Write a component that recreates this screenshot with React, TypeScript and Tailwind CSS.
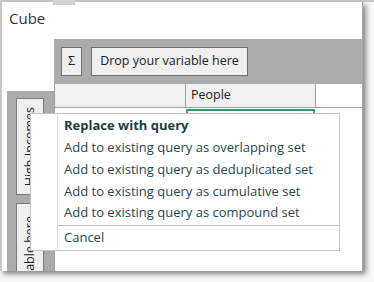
const items = [
  'Add to existing query as overlapping set',
  'Add to existing query as deduplicated set',
  'Add to existing query as cumulative set',
  'Add to existing query as compound set',
]

const ContextMenu: React.FC = () => {
  return (
    <div className="absolute left-[30px] top-[113px] flex h-[138px] w-[310px] border border-[#c4c4c4] bg-white py-px">
      <div className="w-[26px] shrink-0" />
      <div className="flex flex-1 flex-col border-l border-[#dcdcdc] text-[13px] text-[#264653]">
        <div className="flex h-[22px] items-center pl-[6px] font-bold text-[#1d3d3f]">
          Replace with query
        </div>
        {items.map((item) => (
          <div key={item} className="flex h-[22px] items-center pl-[6px]">
            {item}
          </div>
        ))}
        <div className="mt-px h-px bg-[#bdbdbd]" />
        <div className="mt-px flex h-[22px] items-center pl-[6px]">Cancel</div>
      </div>
    </div>
  )
}

const App: React.FC = () => {
  return (
    <div className="relative h-[282px] w-[374px] overflow-hidden bg-[#f6f6f6] font-['Open_Sans',sans-serif]">
      <div className="h-[2px] bg-[#c8c8c8]" />
      <div className="absolute left-[53px] top-0 h-[5px] w-[22px] bg-[#d2d2d2]" />
      <div className="flex h-[269px] w-[363px] flex-col border-l-2 border-r border-[#c8c8c8] border-r-[#a8a8a8] bg-white shadow-[3px_3px_5px_rgba(0,0,0,0.45)]">
        <div className="h-[37px] shrink-0 pl-[7px] pt-[5px] text-[15px] text-[#333333]">
          Cube
        </div>
        <div className="flex flex-1 overflow-hidden">
          <div className="flex w-[52px] shrink-0 flex-col pt-[52px]">
            <div className="ml-[5px] flex flex-1 flex-col gap-[8px] bg-[#ababab] pl-[9px] pt-[7px] text-[12.5px] text-[#222222]">
              <div className="flex h-[97px] w-[28px] shrink-0 items-center justify-center border border-[#7a7a7a] bg-[#efefef]">
                <span className="rotate-180 whitespace-nowrap [writing-mode:vertical-rl]">
                  High Incomes
                </span>
              </div>
              <div className="flex h-[160px] w-[28px] shrink-0 flex-col items-center justify-start border border-[#7a7a7a] bg-[#efefef] pt-[12px]">
                <span className="rotate-180 whitespace-nowrap [writing-mode:vertical-rl]">
                  Drop your variable here
                </span>
              </div>
            </div>
          </div>
          <div className="flex flex-1 flex-col">
            <div className="flex h-[45px] shrink-0 items-start gap-[9px] bg-[#ababab] pl-[7px] pt-[8px] text-[12.5px] text-[#222222]">
              <div className="flex h-[29px] w-[21px] items-center justify-center border border-[#6e6e6e] bg-[#efefef]">
                Σ
              </div>
              <div className="flex h-[29px] w-[157px] items-center justify-center border border-[#6e6e6e] bg-[#efefef]">
                Drop your variable here
              </div>
            </div>
            <div className="flex h-[24px] shrink-0 border-b border-l border-[#a0a0a0] text-[12.5px] text-[#222222]">
              <div className="w-[131px] border-r border-[#a0a0a0] bg-[#f0f0f0]" />
              <div className="flex w-[130px] items-center border-r border-[#a0a0a0] bg-[#f0f0f0] pl-[5px]">
                People
              </div>
            </div>
            <div className="flex flex-1 border-l border-[#a0a0a0] pt-px">
              <div className="w-[131px]" />
              <div className="h-[24px] w-[129px] border-2 border-[#3a9a6a]" />
            </div>
          </div>
        </div>
      </div>
      <ContextMenu />
    </div>
  )
}

export default App
